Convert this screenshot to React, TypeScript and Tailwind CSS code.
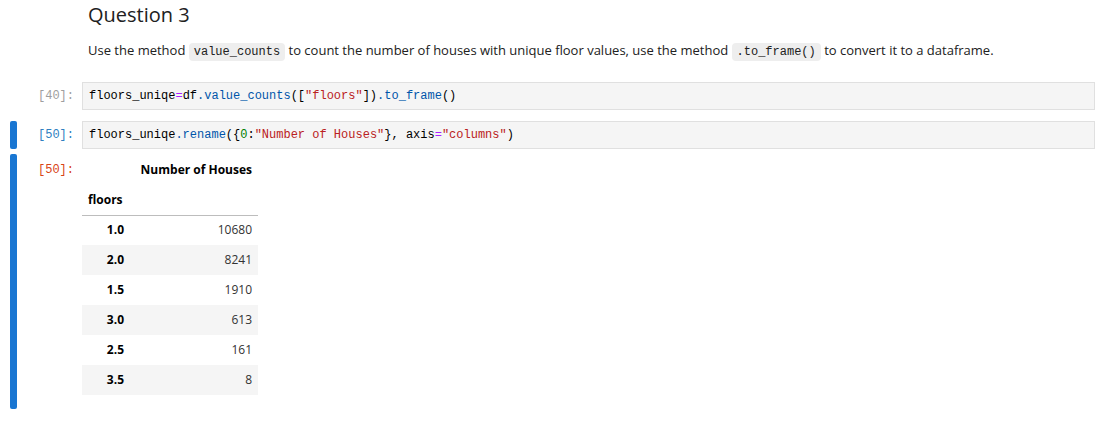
const sans = "font-['Open_Sans','Noto_Sans',sans-serif]";
const mono = "font-['Liberation_Mono','DejaVu_Sans_Mono',monospace]";

const rows = [
  { idx: "1.0", n: 10680 },
  { idx: "2.0", n: 8241 },
  { idx: "1.5", n: 1910 },
  { idx: "3.0", n: 613 },
  { idx: "2.5", n: 161 },
  { idx: "3.5", n: 8 },
];

function Code({ children }: { children: React.ReactNode }) {
  return (
    <code className={`${mono} rounded-sm bg-[#eeeeee] px-[5px] py-[2px] text-[12px] text-[#212121]`}>
      {children}
    </code>
  );
}

function Bar({ active, className = "" }: { active: boolean; className?: string }) {
  return (
    <div className="flex w-[33px] shrink-0 justify-start pl-[10px]">
      {active && <div className={`w-[7px] rounded-[2px] bg-[#1976d2] ${className}`} />}
    </div>
  );
}

function Prompt({ label, color }: { label: string; color: string }) {
  return (
    <div className={`${mono} w-[49px] shrink-0 pr-[8px] text-right text-[12px] leading-[28px] ${color}`}>
      {label}
    </div>
  );
}

function CodeCell({ label, active, children }: { label: string; active: boolean; children: React.ReactNode }) {
  return (
    <div className="flex">
      <Bar active={active} />
      <Prompt label={label} color={active ? "text-[#307fc1]" : "text-[#9e9e9e]"} />
      <div
        className={`${mono} h-[28px] flex-1 border border-[#e0e0e0] bg-[#f5f5f5] pl-[6px] text-[12px] leading-[26px] whitespace-pre text-[#000]`}
      >
        {children}
      </div>
    </div>
  );
}

const Op = ({ c }: { c: string }) => <span className="text-[#aa22ff]">{c}</span>;
const Prop = ({ c }: { c: string }) => <span className="text-[#0055aa]">{c}</span>;
const Str = ({ c }: { c: string }) => <span className="text-[#ba2121]">{c}</span>;
const Num = ({ c }: { c: string }) => <span className="text-[#008000]">{c}</span>;

export default function App() {
  return (
    <div className={`${sans} h-[422px] w-[1095px] overflow-hidden bg-white text-[#212121]`}>
      {/* Markdown cell */}
      <div className="pl-[88px] pt-[2px]">
        <h2 className="text-[20px] leading-[26px] font-normal text-[#212121]">Question 3</h2>
        <p className="mt-[12px] text-[13px] leading-[20px]">
          Use the method <Code>value_counts</Code> to count the number of houses with unique floor values, use the
          method <Code>.to_frame()</Code> to convert it to a dataframe.
        </p>
      </div>

      <div className="mt-[20px]">
        <CodeCell label="[40]:" active={false}>
          floors_uniqe<Op c="=" />df<Prop c=".value_counts" />([<Str c={'"floors"'} />])<Prop c=".to_frame" />()
        </CodeCell>
      </div>

      <div className="mt-[11px]">
        <CodeCell label="[50]:" active={true}>
          floors_uniqe<Prop c=".rename" />({"{"}
          <Num c="0" />:<Str c={'"Number of Houses"'} />
          {"}"}, axis<Op c="=" />
          <Str c={'"columns"'} />)
        </CodeCell>
      </div>

      {/* Output */}
      <div className="mt-[5px] flex">
        <Bar active={true} className="h-[255px]" />
        <div className={`${mono} w-[49px] shrink-0 pr-[8px] pt-[6px] text-right text-[12px] leading-[20px] text-[#d84315]`}>
          [50]:
        </div>
        <div className="pt-[1px]">
          <table className="border-collapse text-[12px] text-[#000]">
            <thead>
              <tr className="h-[30px]">
                <th className="px-[6px]" />
                <th className="px-[6px] text-right font-bold">Number of Houses</th>
              </tr>
              <tr className="h-[30px] border-b border-[#bdbdbd]">
                <th className="px-[6px] text-left font-bold">floors</th>
                <th className="px-[6px]" />
              </tr>
            </thead>
            <tbody>
              {rows.map((r, i) => (
                <tr key={r.idx} className={`h-[30px] ${i % 2 === 1 ? "bg-[#f5f5f5]" : ""}`}>
                  <th className="w-[48px] px-[6px] text-right font-bold">{r.idx}</th>
                  <td className="w-[128px] px-[6px] text-right text-[#333]">{r.n}</td>
                </tr>
              ))}
            </tbody>
          </table>
        </div>
      </div>
    </div>
  );
}
